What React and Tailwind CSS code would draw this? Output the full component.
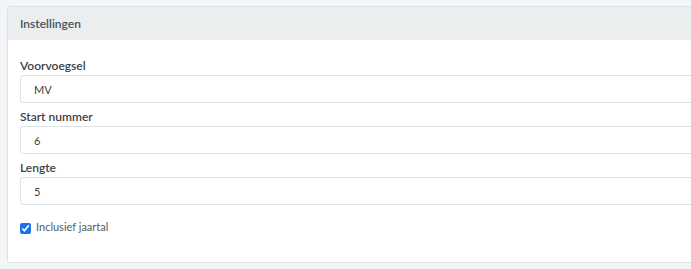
export default function App() {
  return (
    <div
      className="min-h-[269px] w-[691px] overflow-hidden bg-[#f4f5f9] pl-[7px] pt-[6px]"
      style={{ fontFamily: "Lato, 'Open Sans', sans-serif" }}
    >
      <div className="w-[760px] rounded-[3px] border border-[#dfe1e4] bg-white">
        <div className="flex h-[33px] items-center rounded-t-[3px] bg-[#ebeeef] px-[12px]">
          <h3 className="text-[12px] font-semibold text-[#4a5056]">Instellingen</h3>
        </div>

        <div className="px-[12px] pb-[28px] pt-[17px]">
          <div className="mb-[5px]">
            <label className="block h-[18px] text-[12px] font-semibold leading-[17px] text-[#3d4349]">
              Voorvoegsel
            </label>
            <input
              type="text"
              defaultValue="MV"
              className="block h-[28px] w-full rounded-[3px] border border-[#dbe4e4] px-[13px] text-[11px] text-[#3b3f44] outline-none"
            />
          </div>

          <div className="mb-[5px]">
            <label className="block h-[18px] text-[12px] font-semibold leading-[17px] text-[#3d4349]">
              Start nummer
            </label>
            <input
              type="text"
              defaultValue="6"
              className="block h-[28px] w-full rounded-[3px] border border-[#dbe4e4] px-[13px] text-[11px] text-[#3b3f44] outline-none"
            />
          </div>

          <div className="mb-[14px]">
            <label className="block h-[18px] text-[12px] font-semibold leading-[17px] text-[#3d4349]">
              Lengte
            </label>
            <input
              type="text"
              defaultValue="5"
              className="block h-[28px] w-full rounded-[3px] border border-[#dbe4e4] px-[13px] text-[11px] text-[#3b3f44] outline-none"
            />
          </div>

          <label className="flex items-center gap-[5px]">
            <input
              type="checkbox"
              defaultChecked
              className="m-0 mt-[4px] h-[11px] w-[11px] accent-[#1a73e8]"
            />
            <span className="text-[11px] leading-[14px] text-[#555b61]">Inclusief jaartal</span>
          </label>
        </div>
      </div>
    </div>
  );
}
